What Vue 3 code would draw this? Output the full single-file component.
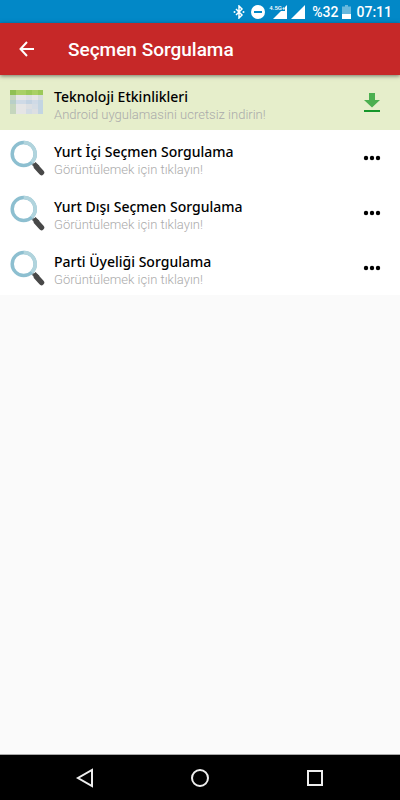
<script setup>
import { ref } from 'vue'

const battery = ref(32)
const time = ref('07:11')

const items = [
    { title: 'Teknoloji Etkinlikleri', subtitle: 'Android uygulamasini ucretsiz indirin!', icon: 'calendar', promo: true },
    { title: 'Yurt İçi Seçmen Sorgulama', subtitle: 'Görüntülemek için tıklayın!', icon: 'search' },
    { title: 'Yurt Dışı Seçmen Sorgulama', subtitle: 'Görüntülemek için tıklayın!', icon: 'search' },
    { title: 'Parti Üyeliği Sorgulama', subtitle: 'Görüntülemek için tıklayın!', icon: 'search' }
]

// one row of cells per line, the first line is the calendar header
const cells = [
    ['#8fc052', '#a9d065', '#9bc958', '#a9d065', '#9bc958'],
    ['#c5d6bd', '#e5e5e5', '#dcdfe2', '#e5e5e5', '#d5dcda'],
    ['#b8cfc8', '#cfdae6', '#c3d3e2', '#cfdae6', '#c3d5e2'],
    ['#c5d6bd', '#e5e5e5', '#dcdfe2', '#d5dde5', '#c3d5e2'],
    ['#c5d6bd', '#e5e5e5', '#d3dce4', '#dcdfe2', '#c3d5e2']
]
const cellX = [0, 6, 16, 22, 28]
const cellY = [0, 5, 10, 14, 19]
</script>

<template>
    <div class="screen">
        <div class="status-bar">
            <svg class="bluetooth" width="12" height="14" viewBox="0 0 12 14">
                <path d="M3 4l6 6-3 3V1l3 3-6 6" />
                <circle cx="1.5" cy="7" r="1" />
                <circle cx="10.5" cy="7" r="1" />
            </svg>
            <svg class="dnd" width="14" height="14" viewBox="0 0 14 14">
                <circle cx="7" cy="7" r="7" fill="#fff" />
                <path d="M3 7h8" stroke="#0288c7" stroke-width="2" />
            </svg>
            <div class="network">
                <span class="network-type">4.5G+</span>
                <svg width="14" height="14" viewBox="0 0 14 14">
                    <path d="M14 0v14H0l8-8h4V2z" fill="#fff" />
                </svg>
            </div>
            <svg width="14" height="14" viewBox="0 0 14 14">
                <path d="M14 0v14H0z" fill="#fff" />
            </svg>
            <span class="percent">%{{ battery }}</span>
            <svg class="battery" width="9" height="14" viewBox="0 0 9 14">
                <path d="M3 0h3v1.500h3V9H0V1.500h3z" fill="#67b8dd" />
                <path d="M0 9h9v5H0z" fill="#fff" />
            </svg>
            <span class="time">{{ time }}</span>
        </div>

        <header class="app-bar">
            <button class="back" type="button" aria-label="Geri">
                <svg width="16" height="16" viewBox="0 0 16 16">
                    <path d="M15 8H2M8 1L1.500 8 8 15" />
                </svg>
            </button>
            <h1>Seçmen Sorgulama</h1>
        </header>

        <main>
            <button v-for="item in items" :key="item.title" class="row" :class="{ promo: item.promo }" type="button">
                <svg v-if="item.icon === 'calendar'" class="row-icon" width="34" height="36" viewBox="0 0 34 36">
                    <g v-for="(line, y) in cells" :key="y">
                        <rect v-for="(color, x) in line" :key="x" :x="cellX[x]" :y="cellY[y] + 5"
                            :width="(cellX[x + 1] || 33) - cellX[x]" :height="(cellY[y + 1] || 24) - cellY[y]"
                            :fill="color" />
                    </g>
                </svg>
                <svg v-else class="row-icon" width="35" height="36" viewBox="0 0 35 36">
                    <path d="M22 23l3 3" stroke="#8a9498" stroke-width="3" />
                    <path d="M26.500 27l5 5.500" stroke="#484848" stroke-width="5.500" stroke-linecap="round" />
                    <path d="M22.500 25l3-3 4 4-3 3z" fill="#484848" />
                    <circle cx="13.700" cy="14" r="11.500" fill="#fff" stroke="#8dbfd0" stroke-width="3.500" />
                    <path d="M13.700 2.500a11.500 11.500 0 0 1 8 19.700" fill="none" stroke="#b1d4dd" stroke-width="3.500" />
                </svg>
                <span class="texts">
                    <span class="title">{{ item.title }}</span>
                    <span class="subtitle">{{ item.subtitle }}</span>
                </span>
                <svg v-if="item.promo" width="18" height="20" viewBox="0 0 18 20">
                    <path d="M6 0h6v7h5l-8 7.500L1 7h5z" fill="#4caf50" />
                    <path d="M1 17h16v2H1z" fill="#16962a" />
                </svg>
                <svg v-else width="18" height="20" viewBox="0 0 18 20">
                    <circle cx="3" cy="10" r="2.200" />
                    <circle cx="9" cy="10" r="2.200" />
                    <circle cx="15" cy="10" r="2.200" />
                </svg>
            </button>
        </main>

        <nav class="nav-bar">
            <button type="button" aria-label="Geri">
                <svg width="20" height="20" viewBox="0 0 20 20">
                    <path d="M17 2v16L3 10z" />
                </svg>
            </button>
            <button type="button" aria-label="Ana ekran">
                <svg width="20" height="20" viewBox="0 0 20 20">
                    <circle cx="10" cy="10" r="8" />
                </svg>
            </button>
            <button type="button" aria-label="Son uygulamalar">
                <svg width="20" height="20" viewBox="0 0 20 20">
                    <path d="M3 3h14v14H3z" />
                </svg>
            </button>
        </nav>
    </div>
</template>

<style>
body {
    margin: 0;
    background: #fafafa;
}
</style>

<style scoped>
.screen {
    display: flex;
    flex-direction: column;
    min-height: 100vh;
    font-family: Roboto, "Liberation Sans", sans-serif;
}

button {
    border: 0;
    padding: 0;
    background: none;
    font: inherit;
    cursor: pointer;
}

svg {
    display: block;
    flex-shrink: 0;
}

.status-bar {
    display: flex;
    align-items: center;
    justify-content: flex-end;
    gap: 4px;
    height: 23px;
    padding-right: 8px;
    background: #0288c7;
    color: #fff;
    font-size: 14px;
    font-weight: 500;
}

.bluetooth {
    fill: #fff;
}

.bluetooth path {
    fill: none;
    stroke: #fff;
    stroke-width: 1.5;
}

.dnd {
    margin-left: 2px;
}

.network {
    display: flex;
    align-items: center;
}

.network-type {
    align-self: flex-start;
    margin-right: -12px;
    font-size: 6px;
    line-height: 6px;
}

.percent {
    margin-left: 3px;
}

.time {
    margin-left: 1px;
}

.app-bar {
    position: relative;
    display: flex;
    align-items: center;
    height: 52px;
    padding-left: 19px;
    background: #c62828;
    box-shadow: 0 1px 4px rgba(0, 0, 0, .5);
    color: #fff;
}

.back path {
    fill: none;
    stroke: #fff;
    stroke-width: 2;
}

h1 {
    margin: 0 0 0 33px;
    font-size: 19px;
    font-weight: 500;
}

main {
    flex: 1;
}

.row {
    display: flex;
    align-items: center;
    width: 100%;
    height: 55px;
    padding: 0 19px 0 10px;
    background: #fff;
    text-align: left;
}

.row.promo {
    background: #e6eecb;
}

.row-icon {
    margin-right: 9px;
}

.promo .row-icon {
    margin-right: 10px;
}

.texts {
    display: flex;
    flex: 1;
    flex-direction: column;
    min-width: 0;
    padding-top: 6px;
}

.title {
    color: #000;
    font-family: "Noto Sans", sans-serif;
    font-size: 14px;
    font-weight: 500;
    line-height: 18px;
}

.subtitle {
    color: #aaa;
    font-size: 13px;
    font-weight: 300;
    line-height: 18px;
}

.nav-bar {
    display: flex;
    justify-content: space-evenly;
    height: 45px;
    border-top: 1px solid #aaa;
    background: #000;
}

.nav-bar button {
    display: flex;
    align-items: center;
    justify-content: center;
    width: 60px;
}

.nav-bar svg {
    fill: none;
    stroke: #eee;
    stroke-width: 2;
}
</style>
